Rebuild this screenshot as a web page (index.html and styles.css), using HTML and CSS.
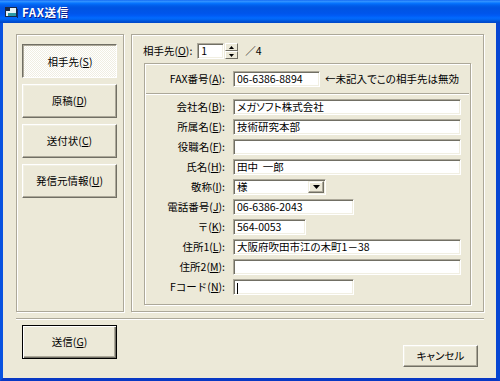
FILE: index.html
```html
<!DOCTYPE html>
<html lang="ja">
<head>
<meta charset="utf-8">
<title>FAX送信</title>
<link rel="stylesheet" href="styles.css">
</head>
<body>
<div class="window">
  <div class="titlebar">
    <svg class="app-icon" width="13" height="11" viewBox="0 0 13 11">
      <rect x="0.5" y="0.5" width="11" height="9" fill="#e6f2f6" stroke="#182848"/>
      <rect x="1" y="1" width="4" height="3" fill="#182848"/>
      <rect x="3" y="6" width="8" height="3" fill="#2a9aa6"/>
      <rect x="12" y="2" width="1" height="9" fill="#0a2a70"/>
    </svg>
    <span class="title">FAX送信</span>
  </div>
  <div class="client">
    <div class="main">
      <div class="panel nav">
        <div class="btn nav-btn pressed">相手先(<u>S</u>)</div>
        <div class="btn nav-btn">原稿(<u>D</u>)</div>
        <div class="btn nav-btn">送付状(<u>C</u>)</div>
        <div class="btn nav-btn">発信元情報(<u>U</u>)</div>
      </div>
      <div class="panel content">
        <div class="spin-row">
          <span class="lbl">相手先(<u>O</u>):</span>
          <div class="field w-spin">1</div>
          <div class="spinner">
            <span class="spin-btn"><svg width="5" height="3" viewBox="0 0 5 3"><polygon points="2.5,0 5,3 0,3" fill="#000"/></svg></span>
            <span class="spin-btn"><svg width="5" height="3" viewBox="0 0 5 3"><polygon points="0,0 5,0 2.5,3" fill="#000"/></svg></span>
          </div>
          <span class="total">／4</span>
        </div>
        <div class="group">
          <div class="form">
            <span class="lbl">FAX番号(<u>A</u>):</span>
            <div class="cell">
              <div class="field w-fax">06-6386-8894</div>
              <span class="note">←未記入でこの相手先は無効</span>
            </div>
          </div>
          <div class="hsep inner"></div>
          <div class="form">
            <span class="lbl">会社名(<u>B</u>):</span>
            <div class="cell"><div class="field w-long">メガソフト株式会社</div></div>
            <span class="lbl">所属名(<u>E</u>):</span>
            <div class="cell"><div class="field w-long">技術研究本部</div></div>
            <span class="lbl">役職名(<u>F</u>):</span>
            <div class="cell"><div class="field w-long"></div></div>
            <span class="lbl">氏名(<u>H</u>):</span>
            <div class="cell"><div class="field w-long">田中&nbsp;&nbsp;一郎</div></div>
            <span class="lbl">敬称(<u>I</u>):</span>
            <div class="cell">
              <div class="field combo w-combo">
                <span class="val">様</span>
                <span class="drop"><svg width="7" height="4" viewBox="0 0 7 4"><polygon points="0,0 7,0 3.5,4" fill="#000"/></svg></span>
              </div>
            </div>
            <span class="lbl">電話番号(<u>J</u>):</span>
            <div class="cell"><div class="field w-mid">06-6386-2043</div></div>
            <span class="lbl">〒(<u>K</u>):</span>
            <div class="cell"><div class="field w-zip">564-0053</div></div>
            <span class="lbl">住所1(<u>L</u>):</span>
            <div class="cell"><div class="field w-long">大阪府吹田市江の木町1－38</div></div>
            <span class="lbl">住所2(<u>M</u>):</span>
            <div class="cell"><div class="field w-long"></div></div>
            <span class="lbl">Fコード(<u>N</u>):</span>
            <div class="cell"><div class="field w-mid"><span class="caret"></span></div></div>
          </div>
        </div>
      </div>
    </div>
    <div class="hsep outer"></div>
    <div class="footer">
      <div class="btn default-btn">送信(<u>G</u>)</div>
      <div class="btn cancel-btn">キャンセル</div>
    </div>
  </div>
</div>
</body>
</html>
```

FILE: styles.css
```css
html, body {
  margin: 0;
  padding: 0;
}

body {
  font-family: "Noto Sans CJK JP", "Noto Sans", sans-serif;
  font-size: 10.5px;
  color: #000;
  background: #ECE9D8;
}

.window {
  width: 500px;
  height: 381px;
  box-sizing: border-box;
  display: flex;
  flex-direction: column;
  border-left: 3px solid #0852E0;
  border-right: 4px solid #0646D2;
  border-bottom: 3px solid #0838C4;
  background: #ECE9D8;
}

.titlebar {
  height: 23px;
  margin: 0 -4px 0 -3px;
  padding-left: 5px;
  display: flex;
  align-items: center;
  gap: 4px;
  background: linear-gradient(to bottom,
    #0058EE 0%, #3A93FF 4%, #288EFF 8%, #127DFF 12%, #036FFC 16%,
    #0262EE 22%, #0057E5 30%, #0054E3 36%, #0055EB 58%, #005BF5 68%,
    #026AFE 78%, #0062EF 86%, #0052D6 92%, #0046C8 100%);
}

.app-icon {
  display: block;
  margin-top: 2px;
}

.title {
  color: #fff;
  font-weight: bold;
  font-size: 11.5px;
  letter-spacing: 0.6px;
  line-height: 14px;
  text-shadow: 1px 1px 0 #0A1E8C;
}

.client {
  flex: 1;
  display: flex;
  flex-direction: column;
  padding: 11px 12px 0 13px;
}

.main {
  display: flex;
  gap: 7px;
  height: 278px;
}

.panel {
  box-sizing: border-box;
  border: 1px solid #ACA899;
  box-shadow: inset 1px 1px 0 #fff, 1px 1px 0 #fff;
}

.nav {
  width: 108px;
  padding: 9px 6px 0 5px;
  display: flex;
  flex-direction: column;
  gap: 6px;
}

.content {
  flex: 1;
  padding: 8px 12px 6px 12px;
  display: flex;
  flex-direction: column;
}

/* buttons */
.btn {
  box-sizing: border-box;
  display: flex;
  align-items: center;
  justify-content: center;
  white-space: nowrap;
  line-height: 14px;
  background: #ECE9D8;
  border: 1px solid;
  border-color: #fff #716F64 #716F64 #fff;
  box-shadow: inset -1px -1px 0 #ACA899, inset 1px 1px 0 #F1EFE2;
}

.nav-btn {
  height: 34px;
}

.nav-btn.pressed {
  border-color: #716F64 #fff #fff #716F64;
  box-shadow: inset 1px 1px 0 #ACA899;
  background: repeating-conic-gradient(#fff 0 25%, #F0EEE2 0 50%) 0 0 / 2px 2px;
  padding: 1px 0 0 1px;
}

.default-btn {
  width: 95px;
  height: 34px;
  border: 1px solid #000;
  box-shadow: inset 1px 1px 0 #fff, inset -1px -1px 0 #716F64, inset -2px -2px 0 #ACA899;
}

.cancel-btn {
  width: 75px;
  height: 22px;
  margin-top: 20px;
  font-feature-settings: "palt";
}

/* spinner row */
.spin-row {
  height: 16px;
  display: flex;
  align-items: center;
}

.spin-row .lbl {
  margin-left: -1px;
  margin-right: 5px;
}

.lbl {
  white-space: nowrap;
  line-height: 16px;
}

.field {
  box-sizing: border-box;
  height: 16px;
  background: #fff;
  border: 1px solid;
  border-color: #ACA899 #fff #fff #ACA899;
  box-shadow: inset 1px 1px 0 #716F64, inset -1px -1px 0 #F1EFE2;
  padding: 0 3px;
  line-height: 14px;
  white-space: nowrap;
  overflow: hidden;
  font-feature-settings: "palt";
}

.w-spin { width: 27px; }
.w-fax { width: 87px; }
.w-long { width: 228px; }
.w-mid { width: 121px; }
.w-zip { width: 73px; }
.w-combo { width: 93px; }

.spinner {
  width: 13px;
  height: 16px;
  margin-left: 1px;
  display: flex;
  flex-direction: column;
}

.spin-btn {
  flex: 1;
  box-sizing: border-box;
  display: flex;
  align-items: center;
  justify-content: center;
  background: #ECE9D8;
  border: 1px solid;
  border-color: #fff #716F64 #716F64 #fff;
}

.spin-btn svg { display: block; }

.total {
  margin-left: 7px;
  line-height: 16px;
}

/* group box */
.group {
  flex: 1;
  margin-top: 4px;
  box-sizing: border-box;
  border: 1px solid #ACA899;
  box-shadow: inset 1px 1px 0 #fff, 1px 1px 0 #fff;
  padding: 7px 0 0 0;
}

.form {
  display: grid;
  grid-template-columns: 80px 1fr;
  grid-auto-rows: 16px;
  column-gap: 8px;
  row-gap: 4px;
}

.form .lbl {
  text-align: right;
}

.cell {
  display: flex;
  align-items: center;
}

.note {
  margin-left: 5px;
  line-height: 16px;
  white-space: nowrap;
  font-feature-settings: "palt";
}

.hsep {
  height: 0;
  border-top: 1px solid #ACA899;
  border-bottom: 1px solid #fff;
}

.hsep.inner {
  margin: 6px 1px 4px 1px;
}

.hsep.outer {
  margin-top: 6px;
}

.combo {
  display: flex;
  padding: 0;
}

.combo .val {
  flex: 1;
  padding-left: 3px;
}

.drop {
  width: 16px;
  margin: 1px 1px 1px 0;
  box-sizing: border-box;
  display: flex;
  align-items: center;
  justify-content: center;
  background: #ECE9D8;
  border: 1px solid;
  border-color: #F1EFE2 #716F64 #716F64 #F1EFE2;
  box-shadow: inset -1px -1px 0 #ACA899, inset 1px 1px 0 #fff;
}

.drop svg { display: block; }

.caret {
  display: inline-block;
  width: 1px;
  height: 11px;
  background: #000;
  vertical-align: middle;
}

.footer {
  display: flex;
  justify-content: space-between;
  align-items: flex-start;
  padding: 5px 6px 0 6px;
}
```
